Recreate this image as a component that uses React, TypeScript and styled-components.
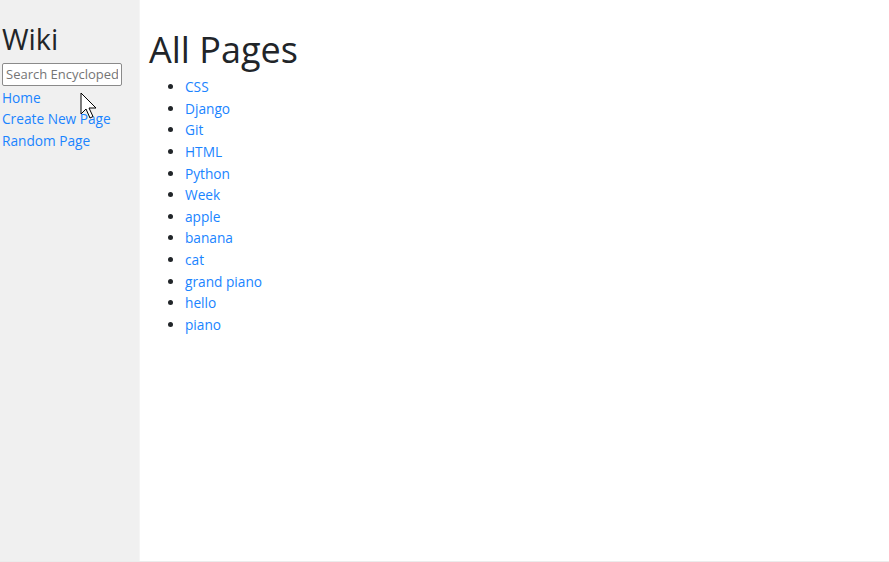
import React from 'react'
import styled, { createGlobalStyle } from 'styled-components'

const GlobalStyle = createGlobalStyle`
  html, body {
    margin: 0;
    padding: 0;
    background: #ffffff;
  }
  body {
    font-family: 'Open Sans', 'Noto Sans', 'Liberation Sans', sans-serif;
    font-size: 13.7px;
    line-height: 1.5;
    color: #212529;
  }
`

const pages = [
  'CSS',
  'Django',
  'Git',
  'HTML',
  'Python',
  'Week',
  'apple',
  'banana',
  'cat',
  'grand piano',
  'hello',
  'piano'
]

const Layout = styled.div`
  position: relative;
  display: flex;
  height: 561px;
  border-bottom: 1px solid #ececec;
`

const Sidebar = styled.nav`
  width: 140px;
  flex-shrink: 0;
  background: #f0f0f0;
  border-right: 1px solid #f5f5f5;
  padding: 22px 0 0 2px;
  box-sizing: border-box;
`

const SideTitle = styled.h2`
  margin: 0 0 6px;
  font-size: 28.8px;
  font-weight: 500;
  line-height: 1.2;
`

const SearchInput = styled.input`
  display: block;
  width: 120px;
  height: 23px;
  box-sizing: border-box;
  margin: 0 0 1px;
  padding: 1px 3px;
  border: 1px solid #8a8a8a;
  border-radius: 2px;
  background: #ffffff;
  font-family: inherit;
  font-size: 13px;
  color: #212529;

  &::placeholder {
    color: #757575;
  }
`

const NavLink = styled.a`
  display: block;
  color: #1a84ff;
  text-decoration: none;
  line-height: 21.6px;
`

const Main = styled.main`
  flex: 1;
  padding: 28px 0 0 9px;
`

const Title = styled.h1`
  margin: 0 0 5px;
  font-size: 36px;
  font-weight: 500;
  line-height: 1.2;
`

const PageList = styled.ul`
  margin: 0;
  padding-left: 36px;
`

const PageItem = styled.li`
  line-height: 21.6px;

  &::marker {
    color: #212529;
  }
`

const PageLink = styled.a`
  color: #1a84ff;
  text-decoration: none;
`

const Cursor = styled.svg`
  position: absolute;
  left: 80px;
  top: 92px;
  pointer-events: none;
`

export default function App() {
  return (
    <>
      <GlobalStyle />
      <Layout>
        <Sidebar>
          <SideTitle>Wiki</SideTitle>
          <form>
            <SearchInput type="text" name="q" placeholder="Search Encyclopedia" />
          </form>
          <NavLink href="#">Home</NavLink>
          <NavLink href="#">Create New Page</NavLink>
          <NavLink href="#">Random Page</NavLink>
        </Sidebar>
        <Main>
          <Title>All Pages</Title>
          <PageList>
            {pages.map((p) => (
              <PageItem key={p}>
                <PageLink href="#">{p}</PageLink>
              </PageItem>
            ))}
          </PageList>
        </Main>
        <Cursor width="20" height="30" viewBox="0 0 20 30">
          <path
            d="M1 1 L1 22 L6 17 L10 26 L13 24.5 L9 16 L16 16 Z"
            fill="#ffffff"
            stroke="#000000"
            strokeWidth="1"
            strokeLinejoin="round"
          />
        </Cursor>
      </Layout>
    </>
  )
}
